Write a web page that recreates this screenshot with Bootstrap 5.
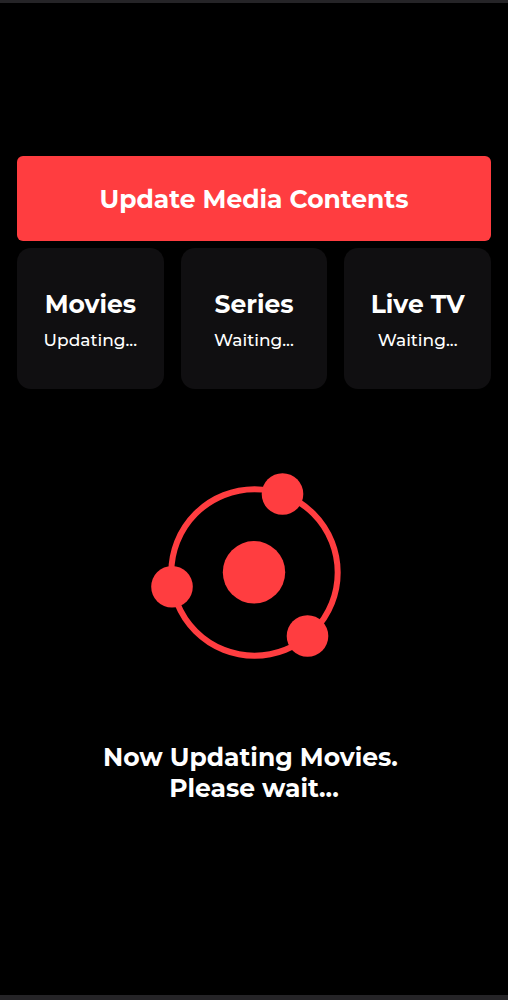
<!DOCTYPE html>
<html lang="en">
<head>
<meta charset="utf-8">
<meta name="viewport" content="width=device-width, initial-scale=1">
<title>Update Media Contents</title>
<link href="https://cdn.jsdelivr.net/npm/bootstrap@5.3.0/dist/css/bootstrap.min.css" rel="stylesheet">
<style>
  :root { --accent: #ff3d40; --panel: #100f11; --edge: #252427; }
  body { background: #000; color: #fff; font-family: Montserrat, Inter, sans-serif; }
  .screen { border-top: 3px solid var(--edge); border-bottom: 5px solid var(--edge); padding: 153px 17px 48px; }
  .btn-update { --bs-btn-color: #fff; --bs-btn-bg: var(--accent); --bs-btn-hover-color: #fff; --bs-btn-hover-bg: #e63639;
    --bs-btn-border-width: 0; --bs-btn-border-radius: 6px; min-height: 85px; padding-top: 8px; }
  .title-text { font-size: 25px; line-height: 31px; font-weight: 700; }
  .tiles { --bs-gutter-x: 17px; --bs-gutter-y: 0; margin-top: 7px; }
  .tile { background: var(--panel); border-radius: 14px; min-height: 141px; padding-top: 4px; }
  .status-text { font-size: 17px; line-height: 24px; font-weight: 500; }
  .loader { width: 220px; margin-top: 73px; }
  .message { margin-top: 60px; }
</style>
</head>
<body>
<main class="screen min-vh-100 d-flex flex-column">
  <button type="button" class="btn btn-update title-text w-100">Update Media Contents</button>
  <div class="row tiles text-center">
    <div class="col-4">
      <section class="tile d-flex flex-column justify-content-center gap-2">
        <h2 class="title-text m-0">Movies</h2>
        <p class="status-text m-0">Updating...</p>
      </section>
    </div>
    <div class="col-4">
      <section class="tile d-flex flex-column justify-content-center gap-2">
        <h2 class="title-text m-0">Series</h2>
        <p class="status-text m-0">Waiting...</p>
      </section>
    </div>
    <div class="col-4">
      <section class="tile d-flex flex-column justify-content-center gap-2">
        <h2 class="title-text m-0">Live TV</h2>
        <p class="status-text m-0">Waiting...</p>
      </section>
    </div>
  </div>
  <svg class="loader align-self-center" viewBox="0 0 220 220" fill="#ff3d40" aria-hidden="true">
    <circle cx="110.5" cy="110.5" r="83.2" fill="none" stroke="#ff3d40" stroke-width="6"/>
    <circle cx="110" cy="110.3" r="31.2"/>
    <circle cx="138.5" cy="32" r="20.8"/>
    <circle cx="28" cy="124.8" r="20.8"/>
    <circle cx="163.5" cy="174" r="20.8"/>
  </svg>
  <p class="message title-text text-center mb-0" role="status">Now Updating Movies.&nbsp;<br>Please wait...</p>
</main>
<script src="https://cdn.jsdelivr.net/npm/bootstrap@5.3.0/dist/js/bootstrap.bundle.min.js"></script>
</body>
</html>
